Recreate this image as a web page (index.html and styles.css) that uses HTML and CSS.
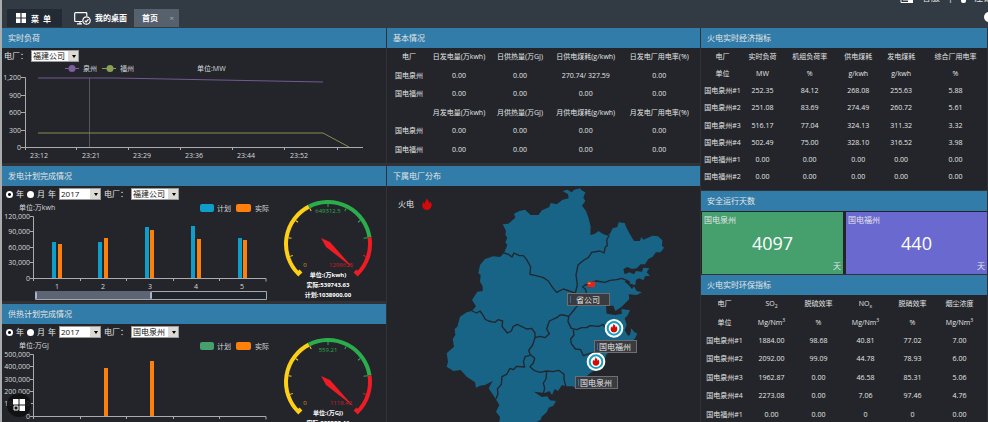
FILE: index.html
```html
<!DOCTYPE html>
<html lang="zh-CN">
<head>
<meta charset="UTF-8">
<meta name="viewport" content="width=device-width, initial-scale=1.0">
<title>首页</title>
<link rel="stylesheet" href="styles.css">
</head>
<body>

<header class="topbar">
    <nav class="tabs">
        <button class="menu-btn" type="button">
            <svg width="10" height="10" viewBox="0 0 10 10"><path fill="#fff" d="M0 0h4.400v4.400H0zM5.600 0H10v4.400H5.600zM0 5.600h4.400V10H0zM5.600 5.600H10V10H5.600z"/></svg>
            菜&ensp;单
        </button>
        <a class="desktop-link" href="#">
            <svg width="17" height="13" viewBox="0 0 17 13" fill="none" stroke="#fff" stroke-width="1.200">
                <path d="M8 9.500H1.500a.8.800 0 0 1-.8-.8V1.500a.8.800 0 0 1 .8-.8h10.500a.8.800 0 0 1 .8.800V4M3 11.800h5M6 9.500v2"/>
                <circle cx="12.500" cy="8.500" r="3.700"/>
                <path d="M10.800 8.700l1.300 1.200 2.400-2.800"/>
            </svg>
            我的桌面
        </a>
        <a class="tab" href="#">首页 <span class="close">×</span></a>
    </nav>
    <div class="user-bar">
        <svg width="14" height="10" viewBox="0 0 14 10"><path fill="none" stroke="#fff" d="M1 2v7.500h8M3 7h5"/><path fill="#fff" d="M8 4h5v6H8z"/></svg>
        <a href="#">客服</a>
        <span>|</span>
        <svg width="5" height="10" viewBox="0 0 5 10"><rect width="5" height="10" rx="2" fill="#fff"/></svg>
        <a href="#">注销</a>
    </div>
    <button class="round-btn" type="button" aria-label="刷新"></button>
</header>

<svg class="defs" width="0" height="0">
    <symbol id="dial" viewBox="0 0 112 100" overflow="visible">
        <g fill="none" stroke-width="4">
            <path stroke="#fdd017" d="M29 69L26.300 71.700A42 42 0 0 1 36.900 4.600"/>
            <path stroke="#2bad4c" d="M36.900 4.600A42 42 0 0 1 97.500 35.400"/>
            <path stroke="#ee1c25" d="M97.500 35.400A42 42 0 0 1 85.700 71.700L83 69"/>
        </g>
        <g stroke="#fdd017">
            <path d="M56 2v3" transform="rotate(-108 56 42)"/>
            <path d="M56 2v3" transform="rotate(-81 56 42)"/>
            <path d="M56 2v3" transform="rotate(-54 56 42)"/>
            <path d="M56 2v3" transform="rotate(-27 56 42)"/>
        </g>
        <g stroke="#2bad4c">
            <path d="M56 2v3"/>
            <path d="M56 2v3" transform="rotate(27 56 42)"/>
            <path d="M56 2v3" transform="rotate(54 56 42)"/>
            <path d="M56 2v4" transform="rotate(81 56 42)"/>
        </g>
        <path stroke="#ee1c25" d="M56 2v3" transform="rotate(108 56 42)"/>
    </symbol>
    <symbol id="flame" viewBox="0 0 10 12">
        <path fill="#d20a0a" d="M4.500 0C5 2 7.500 3 7.300 5.200 8 4.800 8.200 4.200 8.200 3.500 9.500 5 10 6.500 9.500 8.300 9 10.500 7.300 12 5 12S.7 10.500.3 8.300C0 6.500.8 5 1.600 4c.1 1 .4 1.500 1 1.800C2.800 3.500 4.500 2.500 4.500 0z"/>
    </symbol>
</svg>

<main class="board">
    <div class="col">
        <section class="panel">
            <h2>实时负荷</h2>
            <div class="filters first">
                <label for="plant1">电厂：</label>
                <span class="select"><select id="plant1"><option>福建公司</option></select></span>
            </div>
            <svg class="chart" width="383" height="99" viewBox="0 0 383 99">
                <path stroke="#7b5f9e" d="M63 4.500h14"/><circle cx="70" cy="4.500" r="3.500" fill="#7b5f9e"/>
                <text x="81" y="7">泉州</text>
                <path stroke="#8b9f55" d="M100 4.500h14"/><circle cx="108" cy="4.500" r="3.500" fill="#8b9f55"/>
                <text x="118" y="7">福州</text>
                <text x="195" y="7">单位:MW</text>
                <path class="axis" d="M19 13.500h4.500V86M19 31.500h4M19 48.500h4M19 66.500h4M19 83.500h342M74.500 83v3M126.500 83v3M178.500 83v3M230.500 83v3M282.500 83v3M335.500 83v3"/>
                <g class="end">
                    <text x="19" y="16">1,200</text>
                    <text x="19" y="34">900</text>
                    <text x="19" y="51">600</text>
                    <text x="19" y="69">300</text>
                    <text x="19" y="86">0</text>
                </g>
                <g class="mid">
                    <text x="37" y="94">23:12</text>
                    <text x="89" y="94">23:21</text>
                    <text x="140" y="94">23:29</text>
                    <text x="192" y="94">23:36</text>
                    <text x="244" y="94">23:44</text>
                    <text x="297" y="94">23:52</text>
                </g>
                <path stroke="#54565b" d="M87.500 14v69"/>
                <path class="line" stroke="#735a94" d="M36 14h77l208 4"/>
                <path class="line" stroke="#80904f" d="M36 69h285l26 14"/>
            </svg>
        </section>

        <section class="panel">
            <h2>发电计划完成情况</h2>
            <div class="filters">
                <label><input type="radio" name="power" checked>年</label>
                <label><input type="radio" name="power">月</label>
                <label for="year2">年</label>
                <span class="select"><select id="year2" class="year"><option>2017</option></select></span>
                <label for="plant2">电厂：</label>
                <span class="select"><select id="plant2"><option>福建公司</option></select></span>
            </div>
            <div class="charts">
                <svg class="chart" width="270" height="99" viewBox="0 0 270 99">
                    <text x="17" y="8">单位:万kwh</text>
                    <rect x="198" y="2" width="14" height="8" rx="2" fill="#0d9fca"/><text x="215" y="9">计划</text>
                    <rect x="234" y="2" width="15" height="8" rx="2" fill="#fd7f0c"/><text x="253" y="9">实际</text>
                    <path class="axis" d="M28 14.500h3.500V79M28 29.500h3M28 45.500h3M28 60.500h3M28 76.500h236v3M78.500 76v3M124.500 76v3M171.500 76v3M217.500 76v3"/>
                    <g class="end">
                        <text x="28" y="17">120,000</text>
                        <text x="28" y="32">90,000</text>
                        <text x="28" y="48">60,000</text>
                        <text x="28" y="63">30,000</text>
                        <text x="28" y="79">0</text>
                    </g>
                    <path fill="#0d9fca" d="M50 40h4v36h-4zM96 40h4v36h-4zM143 25h4v51h-4zM189 24h4v52h-4zM236 36h4v40h-4z"/>
                    <path fill="#fd7f0c" d="M56 42h4v34h-4zM102 36h4v40h-4zM148 28h4v48h-4zM195 37h4v39h-4zM241 38h4v38h-4z"/>
                    <g class="mid">
                        <text x="55" y="87">1</text>
                        <text x="101" y="87">2</text>
                        <text x="148" y="87">3</text>
                        <text x="194" y="87">4</text>
                        <text x="240" y="87">5</text>
                    </g>
                    <path fill="#1f232c" stroke="#a5a8ad" d="M33.500 89.500h231v8h-231z"/>
                    <rect x="33" y="89" width="117" height="8" rx="2" fill="#5d6473"/>
                    <path stroke="#a9b4c6" stroke-width="2" stroke-linecap="round" d="M34 91v5M149 91v5"/>
                </svg>
                <svg class="chart gauge" width="112" height="99" viewBox="0 0 112 99">
                    <use href="#dial" width="112" height="100"/>
                    <g class="mid">
                        <text class="green" x="56" y="11">649312.5</text>
                        <text class="yellow" x="33" y="65">0</text>
                        <text class="red" x="69" y="65">1298625</text>
                    </g>
                    <path fill="#ee1c25" d="M49 36l9 4 23 26-27-21z"/>
                    <g class="mid bold">
                        <text x="56" y="75">单位:(万kwh)</text>
                        <text x="56" y="85">实际:539743.63</text>
                        <text x="56" y="95">计划:1038900.00</text>
                    </g>
                </svg>
            </div>
        </section>

        <section class="panel">
            <h2>供热计划完成情况</h2>
            <div class="filters">
                <label><input type="radio" name="heat" checked>年</label>
                <label><input type="radio" name="heat">月</label>
                <label for="year3">年</label>
                <span class="select"><select id="year3" class="year"><option>2017</option></select></span>
                <label for="plant3">电厂：</label>
                <span class="select"><select id="plant3"><option>国电泉州</option></select></span>
            </div>
            <div class="charts">
                <svg class="chart" width="270" height="99" viewBox="0 0 270 99">
                    <text x="17" y="8">单位:万GJ</text>
                    <rect x="198" y="2" width="14" height="8" rx="2" fill="#45a06e"/><text x="215" y="9">计划</text>
                    <rect x="234" y="2" width="15" height="8" rx="2" fill="#fd7f0c"/><text x="253" y="9">实际</text>
                    <path class="axis" d="M28 14.500h3.500V79M28 26.500h3M28 39.500h3M28 51.500h3M28 63.500h3M28 76.500h236v3M78.500 76v3M124.500 76v3M171.500 76v3M217.500 76v3"/>
                    <g class="end">
                        <text x="28" y="17">500,000</text>
                        <text x="28" y="29">400,000</text>
                        <text x="28" y="42">300,000</text>
                        <text x="28" y="54">200,000</text>
                        <text x="28" y="66">100,000</text>
                        <text x="28" y="79">0</text>
                    </g>
                    <path fill="#fd7f0c" d="M102 28h4v48h-4zM148 21h4v55h-4z"/>
                    <g class="mid">
                        <text x="55" y="87">1</text>
                        <text x="101" y="87">2</text>
                        <text x="148" y="87">3</text>
                        <text x="194" y="87">4</text>
                        <text x="240" y="87">5</text>
                    </g>
                </svg>
                <svg class="chart gauge" width="112" height="99" viewBox="0 0 112 99">
                    <use href="#dial" width="112" height="100"/>
                    <g class="mid">
                        <text class="green" x="56" y="12">559.21</text>
                        <text class="yellow" x="33" y="65">0</text>
                        <text class="red" x="69" y="65">1118.42</text>
                    </g>
                    <path fill="#ee1c25" d="M49 36l9 4 23 26-27-21z"/>
                    <g class="mid bold">
                        <text x="56" y="75">单位:(万GJ)</text>
                        <text x="56" y="85">实际:932288.46</text>
                    </g>
                </svg>
            </div>
        </section>
    </div>

    <div class="col">
        <section class="panel">
            <h2>基本情况</h2>
            <div class="panel-body">
                <table class="basic">
                    <tr><th>电厂</th><th>日发电量(万kwh)</th><th>日供热量(万GJ)</th><th>日供电煤耗(g/kwh)</th><th>日发电厂用电率(%)</th></tr>
                    <tr><td>国电泉州</td><td>0.00</td><td>0.00</td><td>270.74/ 327.59</td><td>0.00</td></tr>
                    <tr><td>国电福州</td><td>0.00</td><td>0.00</td><td>0.00</td><td>0.00</td></tr>
                    <tr><th></th><th>月发电量(万kwh)</th><th>月供热量(万GJ)</th><th>月供电煤耗(g/kwh)</th><th>月发电厂用电率(%)</th></tr>
                    <tr><td>国电泉州</td><td>0.00</td><td>0.00</td><td>0.00</td><td>0.00</td></tr>
                    <tr><td>国电福州</td><td>0.00</td><td>0.00</td><td>0.00</td><td>0.00</td></tr>
                </table>
            </div>
        </section>

        <section class="panel grow">
            <h2>下属电厂分布</h2>
            <div class="map-body">
                <div class="map-legend">火电 <svg width="10" height="12"><use href="#flame"/></svg></div>
                <div class="map">
                    <svg width="230" height="236" viewBox="30 3 690 708">
                        <path fill="#186486" d="M398 18L412 14 425 22 433 14 450 10 455 16 466 22 460 38 466 48 456 62 468 78 476 100 482 125 481 150 495 146 505 138 518 146 532 152 540 146 548 130 562 126 566 112 584 114 590 130 600 148 612 168 630 168 634 156 640 164 668 152 684 154 697 166 696 182 702 188 692 202 678 202 668 215 655 222 645 238 632 238 620 250 606 252 592 246 580 252 584 268 598 262 612 268 618 258 636 260 640 248 658 250 650 262 660 272 645 274 640 286 628 280 618 284 616 300 600 296 592 284 584 290 596 300 606 312 612 304 620 318 636 322 620 330 596 328 598 342 590 350 574 366 556 378 550 362 528 362 530 386 556 390 576 386 574 372 600 376 592 392 584 400 590 420 584 436 594 452 600 450 604 430 612 440 622 446 614 462 600 470 590 465 560 480 530 508 520 530 505 548 480 565 462 580 440 612 428 604 408 604 396 600 384 618 374 612 366 630 358 618 345 624 312 620 335 636 352 634 360 646 378 648 370 662 356 668 350 682 335 695 332 704 320 711 208 711 210 696 198 680 208 660 196 640 186 625 176 610 188 588 165 600 150 602 138 608 135 592 110 575 92 555 70 558 50 545 54 530 50 505 72 485 68 462 76 450 74 432 82 425 90 395 110 382 126 378 138 364 126 345 142 320 158 318 158 304 150 290 152 270 145 265 150 240 165 222 190 214 210 216 222 204 232 180 226 172 232 158 226 150 228 138 218 118 235 116 256 98 252 86 268 78 285 74 302 90 325 90 336 76 358 66 362 54 380 58 398 44 416 40 414 28Z"/>
                        <g fill="none" stroke="#22262d" stroke-width="4" stroke-linejoin="round">
                            <path d="M222 204L235 208 246 216 252 204 268 212 280 212 290 224 302 246 300 268 318 272 340 278 355 288 368 308 380 322 400 312 430 322 436 324 442 300 438 270 444 240 462 225 475 218 485 202 510 198 522 204 526 186 532 182 530 165 538 150"/>
                            <path d="M470 326L466 312 458 306 468 298 480 306 490 290 500 288 525 292 540 286 560 284 575 280 590 286 600 292"/>
                            <path d="M126 378L140 384 150 378 160 392 165 402 175 408 195 412 204 404 218 408 216 424 232 444 244 438 250 424 262 418 290 432 305 430 315 444 315 458 330 454 345 458 358 446 350 432 358 408 380 398 390 390 400 390 416 394 432 375 442 362"/>
                            <path d="M416 394L414 410 424 430 440 434 455 428 470 428 480 422 505 424 520 418 528 434"/>
                            <path d="M430 434L432 450 422 462 424 476 436 492 452 494 460 512 480 505 500 500"/>
                            <path d="M315 458L308 480 296 496 300 508 314 520 310 534 300 545 312 556 330 562 350 558 370 560 386 556 402 568 402 584 408 606"/>
                            <path d="M300 512L286 514 280 530 284 546 260 544 250 554 240 550 230 568 216 575 214 598 202 612 204 626 198 642"/>
                            <path d="M350 560L348 582 340 594 344 610 340 626"/>
                        </g>
                        <path fill="#e3261b" d="M472 289q12 4 23 0v16q-11 4-23 0z"/>
                        <path fill="#f3b23a" d="M475 293h6v4h-6z"/>
                        <g stroke="#fff" stroke-width="6" fill="#fff">
                            <circle cx="552" cy="430" r="25"/>
                            <circle cx="498" cy="530" r="25"/>
                        </g>
                        <g stroke="#18a0bc" stroke-width="6" fill="#fff">
                            <circle cx="552" cy="430" r="19"/>
                            <circle cx="498" cy="530" r="19"/>
                        </g>
                        <use href="#flame" x="541" y="415" width="22" height="28"/>
                        <use href="#flame" x="487" y="515" width="22" height="28"/>
                    </svg>
                    <span class="place company">省公司</span>
                    <span class="place fuzhou">国电福州</span>
                    <span class="place quanzhou">国电泉州</span>
                </div>
            </div>
        </section>
    </div>

    <div class="col right">
        <section class="panel">
            <h2>火电实时经济指标</h2>
            <table class="economy">
                <tr><th>电厂</th><th>实时负荷</th><th>机组负荷率</th><th>供电煤耗</th><th>发电煤耗</th><th>综合厂用电率</th></tr>
                <tr><td>单位</td><td>MW</td><td>%</td><td>g/kwh</td><td>g/kwh</td><td>%</td></tr>
                <tr><td>国电泉州#1</td><td>252.35</td><td>84.12</td><td>268.08</td><td>255.63</td><td>5.88</td></tr>
                <tr><td>国电泉州#2</td><td>251.08</td><td>83.69</td><td>274.49</td><td>260.72</td><td>5.61</td></tr>
                <tr><td>国电泉州#3</td><td>516.17</td><td>77.04</td><td>324.13</td><td>311.32</td><td>3.32</td></tr>
                <tr><td>国电泉州#4</td><td>502.49</td><td>75.00</td><td>328.10</td><td>316.52</td><td>3.98</td></tr>
                <tr><td>国电福州#1</td><td>0.00</td><td>0.00</td><td>0.00</td><td>0.00</td><td>0.00</td></tr>
                <tr><td>国电福州#2</td><td>0.00</td><td>0.00</td><td>0.00</td><td>0.00</td><td>0.00</td></tr>
            </table>
        </section>

        <section class="panel">
            <h2>安全运行天数</h2>
            <div class="days">
                <div class="day-card green-card"><span>国电泉州</span><strong>4097</strong><em>天</em></div>
                <div class="day-card purple-card"><span>国电福州</span><strong>440</strong><em>天</em></div>
            </div>
        </section>

        <section class="panel grow">
            <h2>火电实时环保指标</h2>
            <div class="env-body">
                <table class="env">
                    <tr><th>电厂</th><th>SO<sub>2</sub></th><th>脱硫效率</th><th>NO<sub>x</sub></th><th>脱硝效率</th><th>烟尘浓度</th></tr>
                    <tr><td>单位</td><td>Mg/Nm<sup>3</sup></td><td>%</td><td>Mg/Nm<sup>3</sup></td><td>%</td><td>Mg/Nm<sup>3</sup></td></tr>
                    <tr><td>国电泉州#1</td><td>1884.00</td><td>98.68</td><td>40.81</td><td>77.02</td><td>7.00</td></tr>
                    <tr><td>国电泉州#2</td><td>2092.00</td><td>99.09</td><td>44.78</td><td>78.93</td><td>6.00</td></tr>
                    <tr><td>国电泉州#3</td><td>1962.87</td><td>0.00</td><td>46.58</td><td>85.31</td><td>5.06</td></tr>
                    <tr><td>国电泉州#4</td><td>2273.08</td><td>0.00</td><td>7.06</td><td>97.46</td><td>4.76</td></tr>
                    <tr><td>国电福州#1</td><td>0.00</td><td>0.00</td><td>0</td><td>0</td><td>0.00</td></tr>
                </table>
            </div>
        </section>
    </div>
</main>

<button class="float-btn" type="button" aria-label="菜单">
    <svg width="12" height="12" viewBox="0 0 12 12"><path fill="#fff" d="M0 0h5.500v5.500H0zM6.500 0H12v5.500H6.500zM6.500 6.500H12V12H6.500z"/><path fill="none" stroke="#fff" d="M1 7h4v4H1z"/></svg>
</button>

</body>
</html>
```

FILE: styles.css
```css
* {
    box-sizing: border-box;
}
body {
    margin: 0;
    height: 100vh;
    overflow: hidden;
    display: flex;
    flex-direction: column;
    border-left: 2px solid #a9adad;
    background-color: #303236;
    color: #e4e5e6;
    font-family: "Open Sans", "Noto Sans CJK SC", sans-serif;
    font-size: 8px;
    line-height: 12px;
}
button, select, input {
    font-family: inherit;
    font-size: inherit;
    margin: 0;
    padding: 0;
    border: none;
}
a {
    color: inherit;
    text-decoration: none;
}
svg {
    display: block;
    flex-shrink: 0;
}
.defs {
    position: absolute;
}

/* top bar */
.topbar {
    position: relative;
    flex: none;
    height: 28px;
    display: flex;
    justify-content: space-between;
    background-color: #323a43;
}
.tabs {
    display: flex;
    align-items: center;
    padding: 9px 0 1px 5px;
    font-weight: bold;
    color: #fff;
}
.menu-btn {
    display: flex;
    align-items: center;
    gap: 5px;
    width: 55px;
    height: 18px;
    padding-left: 9px;
    background-color: #222a35;
    color: #fff;
    font-weight: bold;
}
.desktop-link {
    display: flex;
    align-items: center;
    gap: 4px;
    padding: 0 7px 0 12px;
}
.tab {
    display: flex;
    align-items: center;
    justify-content: space-between;
    width: 45px;
    height: 18px;
    padding: 0 5px 0 8px;
    background-color: #56616d;
}
.close {
    color: #a3abb3;
    font-weight: normal;
}
.user-bar {
    display: flex;
    align-items: center;
    gap: 8px;
    height: 12px;
    margin: -8px -4px 0 0;
    font-size: 9px;
}
.round-btn {
    position: absolute;
    right: -6px;
    top: 12px;
    width: 10px;
    height: 10px;
    border-radius: 50%;
    background-color: #fff;
}

/* layout */
.board {
    flex: 1;
    min-height: 0;
    display: grid;
    grid-template-columns: 384fr 313fr 286fr;
    column-gap: 1px;
    padding-right: 1px;
}
.col {
    display: flex;
    flex-direction: column;
    gap: 3px;
    min-width: 0;
    min-height: 0;
}
.col.right {
    gap: 1px;
}
.panel {
    flex: none;
    background-color: #23252a;
}
.panel.grow {
    flex: 1 0 auto;
}
.panel h2 {
    margin: 0;
    height: 20px;
    padding-left: 6px;
    background-color: #317ca8;
    font-size: 8px;
    font-weight: normal;
    line-height: 20px;
}
.panel-body {
    height: 115px;
}

/* filters */
.filters {
    display: flex;
    align-items: center;
    gap: 3px;
    height: 16px;
    padding-left: 4px;
}
.filters.first {
    padding-left: 2px;
}
.filters label {
    display: flex;
    align-items: center;
    gap: 3px;
}
.filters input {
    appearance: none;
    width: 7px;
    height: 7px;
    border-radius: 50%;
    background-color: #fff;
}
.filters input:checked {
    background: radial-gradient(circle, #111 0 1px, #fff 2px);
}
.select {
    position: relative;
}
.select::after {
    content: "";
    position: absolute;
    right: 3px;
    top: 5px;
    border: 2px solid transparent;
    border-top: 3px solid #000;
    pointer-events: none;
}
.select select {
    appearance: none;
    display: block;
    width: 48px;
    height: 12px;
    padding-left: 1px;
    border: 1px solid #9a9a9a;
    background: linear-gradient(#dcdad5, #dcdad5) right / 10px 100% no-repeat #fff;
    color: #111;
    line-height: 10px;
}
.select .year {
    width: 42px;
}

/* charts */
.charts {
    display: flex;
}
.chart {
    fill: #d8d9da;
    font-size: 7px;
}
.axis {
    fill: none;
    stroke: #a9abae;
}
.line {
    fill: none;
}
.end {
    text-anchor: end;
}
.mid {
    text-anchor: middle;
}
.gauge {
    overflow: visible;
    font-size: 6px;
}
.bold {
    font-weight: bold;
    fill: #fff;
}
.green {
    fill: #2bad4c;
}
.yellow {
    fill: #d89b1c;
}
.red {
    fill: #c9222a;
}

/* tables */
table {
    width: 100%;
    table-layout: fixed;
    border-collapse: collapse;
    font-size: 7px;
    line-height: 10px;
    text-align: center;
}
th, td {
    padding: 0;
    font-weight: normal;
    white-space: nowrap;
}
sub, sup {
    font-size: 5px;
    line-height: 0;
}
.basic {
    height: 111px;
}
.basic th:nth-child(1) { width: 14%; }
.basic th:nth-child(2) { width: 18%; }
.basic th:nth-child(3) { width: 21%; }
.basic th:nth-child(4) { width: 21%; }
.basic th:nth-child(5) { width: 26%; }
.economy {
    height: 138px;
    margin-bottom: 4px;
}
.economy th:nth-child(1) { width: 15%; }
.economy th:nth-child(2) { width: 13%; }
.economy th:nth-child(3) { width: 20%; }
.economy th:nth-child(4) { width: 14%; }
.economy th:nth-child(5) { width: 16%; }
.economy th:nth-child(6) { width: 22%; }
.env-body {
    padding-right: 4px;
}
.env {
    height: 129px;
}

/* running days */
.days {
    display: grid;
    grid-template-columns: 1fr 1fr;
    gap: 3px;
    padding: 1px 0 0 1px;
}
.day-card {
    display: flex;
    flex-direction: column;
    justify-content: space-between;
    height: 62px;
    padding: 2px;
}
.day-card strong {
    font-size: 18px;
    font-weight: normal;
    line-height: 20px;
    text-align: center;
    color: #fff;
}
.day-card em {
    font-style: normal;
    text-align: right;
}
.green-card {
    background-color: #45a06e;
}
.purple-card {
    background-color: #6a69d0;
}

/* map */
.map-body {
    display: flex;
}
.map-legend {
    display: flex;
    gap: 8px;
    width: 53px;
    padding: 12px 0 0 11px;
}
.map {
    position: relative;
}
.place {
    position: absolute;
    width: 43px;
    height: 13px;
    padding-left: 4px;
    border: 1px solid #6d6f72;
    background-color: #3a3b3e;
    line-height: 11px;
}
.place::before {
    content: "";
    position: absolute;
    left: 2px;
    top: 2px;
    width: 1px;
    height: 7px;
    background-color: #2f6fa8;
}
.company {
    left: 127px;
    top: 107px;
    padding-left: 8px;
}
.fuzhou {
    left: 154px;
    top: 154px;
}
.quanzhou {
    left: 135px;
    top: 190px;
}

.float-btn {
    position: fixed;
    left: 7px;
    bottom: 5px;
    display: flex;
    align-items: center;
    justify-content: center;
    width: 24px;
    height: 24px;
    border-radius: 50%;
    background-color: rgba(14, 15, 17, 0.85);
    cursor: pointer;
}
```
